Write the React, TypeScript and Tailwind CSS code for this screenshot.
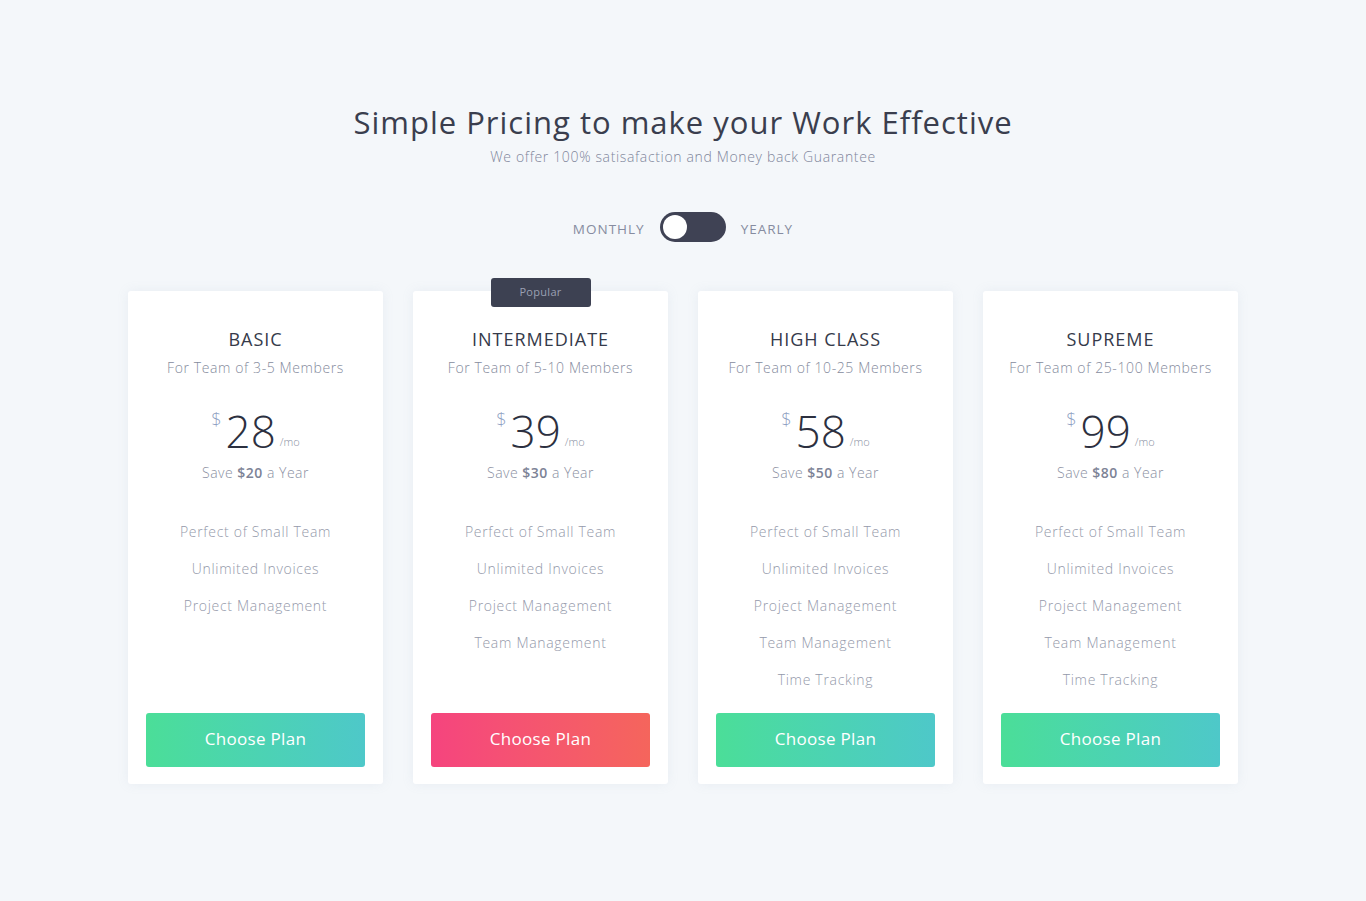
import { useState } from "react";

type Plan = {
  name: string;
  team: string;
  price: number;
  save: number;
  features: string[];
  popular?: boolean;
};

const allFeatures = [
  "Perfect of Small Team",
  "Unlimited Invoices",
  "Project Management",
  "Team Management",
  "Time Tracking",
];

const plans: Plan[] = [
  { name: "Basic", team: "For Team of 3-5 Members", price: 28, save: 20, features: allFeatures.slice(0, 3) },
  { name: "Intermediate", team: "For Team of 5-10 Members", price: 39, save: 30, features: allFeatures.slice(0, 4), popular: true },
  { name: "High Class", team: "For Team of 10-25 Members", price: 58, save: 50, features: allFeatures },
  { name: "Supreme", team: "For Team of 25-100 Members", price: 99, save: 80, features: allFeatures },
];

const PlanCard = ({ plan }: { plan: Plan }) => {
  return (
    <div className="relative flex flex-col items-center rounded-[3px] bg-white px-[18px] pt-[36px] pb-[17px] text-center shadow-[0_0_12px_rgba(150,165,190,0.12)]">
      {plan.popular && (
        <div className="absolute left-1/2 top-[-13px] flex h-[29px] w-[100px] -translate-x-1/2 items-center justify-center rounded-[3px] bg-[#3d4152] text-[11px] tracking-[0.3px] text-[#9aa0b2]">
          Popular
        </div>
      )}
      <h3 className="text-[18px] uppercase leading-[24px] tracking-[1px] text-[#353a4a]">{plan.name}</h3>
      <p className="mt-[7px] text-[14px] font-light leading-[20px] tracking-[0.6px] text-[#858b9d]">{plan.team}</p>
      <div className="mt-[29px] flex h-[48px] justify-center">
        <span className="mt-[2px] mr-[4px] text-[18px] font-light leading-[20px] text-[#8fa2c4]">$</span>
        <span className="text-[44px] font-light leading-[48px] text-[#2c3040]">{plan.price}</span>
        <span className="mb-[6px] ml-[4px] self-end text-[11px] font-light leading-[14px] text-[#8a90a2]">/mo</span>
      </div>
      <p className="mt-[8px] text-[14px] font-light leading-[20px] tracking-[0.5px] text-[#8a90a2]">
        Save <span className="font-semibold text-[#7d8396]">${plan.save}</span> a Year
      </p>
      <ul className="mt-[30px] mb-[15px] flex flex-col">
        {plan.features.map((f) => (
          <li key={f} className="text-[14px] font-light leading-[37px] tracking-[0.7px] text-[#9499aa]">
            {f}
          </li>
        ))}
      </ul>
      <button
        className={
          "mt-auto h-[54px] w-full rounded-[3px] pb-[2px] text-[17px] tracking-[0.3px] text-white " +
          (plan.popular
            ? "bg-gradient-to-r from-[#f5447e] to-[#f5655c]"
            : "bg-gradient-to-r from-[#4bde98] to-[#4ec8c9]")
        }
      >
        Choose Plan
      </button>
    </div>
  );
};

export default function App() {
  const [yearly, setYearly] = useState(false);

  return (
    <div
      className="min-h-[901px] bg-[#f4f7fa] pt-[100px]"
      style={{ fontFamily: '"Open Sans", "Noto Sans", sans-serif' }}
    >
      <div className="mx-auto w-[1110px]">
        <div className="text-center">
          <h1 className="text-[31px] leading-[44px] tracking-[1px] text-[#3a3e4e]">
            Simple Pricing to make your Work Effective
          </h1>
          <p className="mt-[3px] text-[14px] font-light leading-[20px] tracking-[0.65px] text-[#80869a]">
            We offer 100% satisafaction and Money back Guarantee
          </p>
        </div>

        <div className="mt-[45px] flex items-center justify-center gap-[15px]">
          <span className="translate-y-[2px] text-[13.5px] uppercase tracking-[1px] text-[#868ca0]">Monthly</span>
          <button
            onClick={() => setYearly(!yearly)}
            className="flex h-[30px] w-[66px] items-center rounded-full bg-[#3f4254] px-[3px]"
          >
            <span
              className={
                "h-[24px] w-[24px] rounded-full bg-white transition-transform " +
                (yearly ? "translate-x-[36px]" : "translate-x-0")
              }
            />
          </button>
          <span className="translate-y-[2px] text-[13.5px] uppercase tracking-[1px] text-[#868ca0]">Yearly</span>
        </div>

        <div className="mt-[49px] grid grid-cols-4 gap-[30px]">
          {plans.map((p) => (
            <PlanCard key={p.name} plan={p} />
          ))}
        </div>
      </div>
    </div>
  );
}
